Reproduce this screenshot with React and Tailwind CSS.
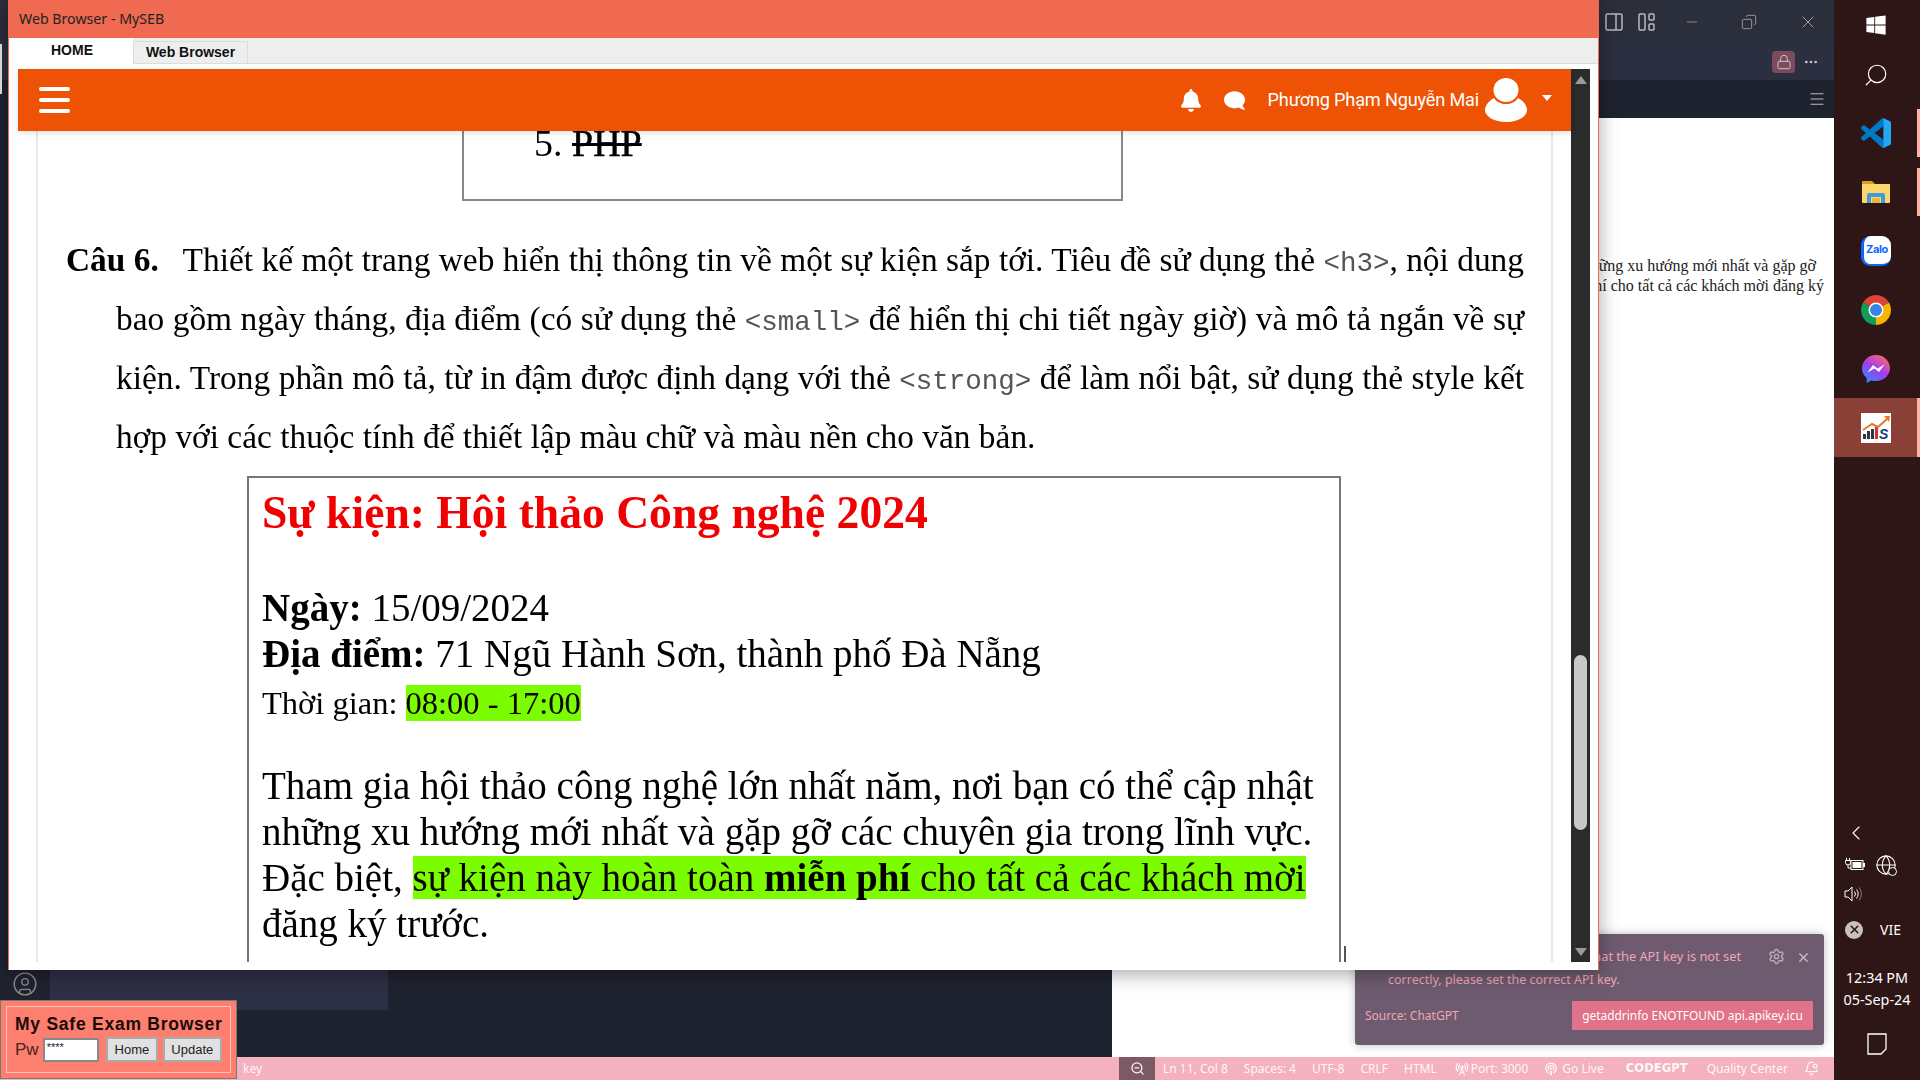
import { FaBell, FaComment, FaWindows } from 'react-icons/fa';
import { X, Settings, Search, ChevronLeft, Minus, Copy, Lock, MoreHorizontal, CircleUser, RadioTower, Podcast, BellDot, ZoomOut, Menu, Globe } from 'lucide-react';

const SERIF = "font-['Liberation_Serif',serif]";
const UI = "font-['Noto_Sans',sans-serif]";

function Mono({ children }) {
  return <span className="font-['Liberation_Mono',monospace] text-[27.5px] text-[#555]">{children}</span>;
}

function JustLine({ className = '', children }) {
  return <div className={`h-[59px] leading-[59px] whitespace-nowrap [text-align:justify] [text-align-last:justify] ${className}`}>{children}</div>;
}

function Question() {
  return (
    <div className="mt-[29px] mr-[27px] ml-[28px] text-[33.4px] text-[#000]">
      <JustLine>
        <b className="mr-[16px]">Câu 6.</b> Thiết kế một trang web hiển thị thông tin về một sự kiện sắp tới. Tiêu đề sử dụng thẻ <Mono>&lt;h3&gt;</Mono>, nội dung
      </JustLine>
      <JustLine className="pl-[50px]">
        bao gồm ngày tháng, địa điểm (có sử dụng thẻ <Mono>&lt;small&gt;</Mono> để hiển thị chi tiết ngày giờ) và mô tả ngắn về sự
      </JustLine>
      <JustLine className="pl-[50px]">
        kiện. Trong phần mô tả, từ in đậm được định dạng với thẻ <Mono>&lt;strong&gt;</Mono> để làm nổi bật, sử dụng thẻ style kết
      </JustLine>
      <div className="h-[59px] pl-[50px] leading-[59px] whitespace-nowrap">
        hợp với các thuộc tính để thiết lập màu chữ và màu nền cho văn bản.
      </div>
    </div>
  );
}

function EventBox() {
  return (
    <div className="relative mt-[10px] ml-[209px] h-[520px] w-[1094px] border-2 border-b-0 border-[#777] pl-[13px] text-[39px] leading-[46px] text-[#000]">
      <h3 className="mt-[10px] mb-[47px] text-[45.6px] leading-[50px] font-bold text-[#f00000]">Sự kiện: Hội thảo Công nghệ 2024</h3>
      <div><b>Ngày:</b> 15/09/2024</div>
      <div><b>Địa điểm:</b> 71 Ngũ Hành Sơn, thành phố Đà Nẵng</div>
      <div className="mt-[3px] text-[32.5px] leading-[46px]">
        Thời gian: <span className="inline-block h-[36px] bg-[#7cfc00] leading-[36px]">08:00 - 17:00</span>
      </div>
      <div className="mt-[37px] whitespace-nowrap">Tham gia hội thảo công nghệ lớn nhất năm, nơi bạn có thể cập nhật</div>
      <div className="whitespace-nowrap">những xu hướng mới nhất và gặp gỡ các chuyên gia trong lĩnh vực.</div>
      <div className="whitespace-nowrap">
        Đặc biệt, <span className="bg-[#7cfc00]">sự kiện này hoàn toàn <b>miễn phí</b> cho tất cả các khách mời</span>
      </div>
      <div className="whitespace-nowrap">đăng ký trước.</div>
      <div className="absolute top-[468px] -right-[7px] h-[18px] w-[2px] bg-[#555]" />
    </div>
  );
}

function Scrollbar() {
  return (
    <div className="flex w-[19px] flex-col items-center bg-[#2b2b2b] pt-[7px]">
      <svg width="12" height="8" viewBox="0 0 12 8"><polygon points="6,0 12,8 0,8" fill="#9a9a9a" /></svg>
      <div className="mt-[571px] h-[175px] w-[13px] rounded-full bg-[#c8c8c8]" />
      <svg className="mt-[118px]" width="12" height="8" viewBox="0 0 12 8"><polygon points="0,0 12,0 6,8" fill="#9a9a9a" /></svg>
    </div>
  );
}

function Navbar() {
  return (
    <div className="relative z-10 flex h-[62px] items-center bg-[#ee5305] pr-[19px] pl-[21px] text-white shadow-[0_2px_6px_rgba(0,0,0,0.12)]">
      <div className="flex w-[31px] flex-col gap-[7px]">
        <div className="h-[4px] rounded-full bg-white" />
        <div className="h-[4px] rounded-full bg-white" />
        <div className="h-[4px] rounded-full bg-white" />
      </div>
      <FaBell className="mr-[22px] ml-auto h-[23px] w-[20px]" />
      <FaComment className="mr-[22px] h-[21px] w-[23px] -scale-x-100" />
      <span className="font-['Roboto',sans-serif] text-[18.2px] tracking-[-0.2px]">Phương Phạm Nguyễn Mai</span>
      <svg className="ml-[6px]" width="42" height="44" viewBox="0 0 42 44">
        <ellipse cx="21" cy="12" rx="12.5" ry="12" fill="#fff" />
        <path d="M9 20 C2 24 0 29 0 32 C0 39 10 44 21 44 C32 44 42 39 42 32 C42 28 39 23 33 20 C28 28 14 28 9 20Z" fill="#fff" />
      </svg>
      <svg className="mt-[-4px] ml-[15px]" width="10" height="6" viewBox="0 0 10 6"><polygon points="0,0 10,0 5,6" fill="#fff" /></svg>
    </div>
  );
}

function ExamWindow() {
  return (
    <div className="absolute top-0 left-[8px] z-10 flex h-[970px] w-[1591px] flex-col border-x border-[#f06a51] bg-white shadow-[0_4px_18px_rgba(0,0,0,0.35)]">
      <div className="flex h-[38px] items-center bg-[#f06a51] pl-[10px] font-['Noto_Sans',sans-serif] text-[14.2px] text-[#222]">Web Browser - MySEB</div>
      <div className="flex h-[26px] items-stretch border-b border-[#dcdcdc] bg-[#eeeeee] font-['Liberation_Sans',sans-serif] text-[14px] font-bold text-[#111]">
        <div className="z-10 flex h-[31px] w-[124px] items-start justify-center bg-white pt-[2px] pl-[2px]">HOME</div>
        <div className="mt-[3px] flex w-[115px] items-center justify-center border-x border-t border-[#dcdcdc]">Web Browser</div>
      </div>
      <div className="mt-[5px] ml-[9px] flex h-[893px] w-[1572px]">
        <div className="flex w-[1553px] flex-col">
          <Navbar />
          <div className={`flex-1 overflow-hidden ${SERIF} blur-[0.4px]`}>
            <div className="mx-[18px] h-[831px] border-x-2 border-[#e8e8e8]">
              <div className="ml-[424px] h-[70px] w-[661px] border-x-2 border-b-2 border-[#888] pl-[70px] text-[38px] leading-[24px]">
                5. <span className="line-through [-webkit-text-stroke:0.5px_#000]">PHP</span>
              </div>
              <Question />
              <EventBox />
            </div>
          </div>
        </div>
        <Scrollbar />
      </div>
    </div>
  );
}

function ExamWidget() {
  return (
    <div className="absolute bottom-px left-0 z-20 h-[79px] w-[237px] border border-[#777] bg-[#fd7f6f] p-[5px]">
      <div className="flex h-full flex-col border border-[#ffc2b8] px-[8px] pt-[5px] font-['Liberation_Sans',sans-serif]">
        <div className="text-[17.5px] leading-[24px] font-bold tracking-[0.75px] whitespace-nowrap text-[#1a0a08]">My Safe Exam Browser</div>
        <div className="mt-[1px] flex items-center">
          <span className="w-[28px] text-[17px] text-[#4a2420]">Pw</span>
          <div className="h-[24px] w-[57px] border-2 border-[#888] bg-white pl-[2px] text-[11px] leading-[14px] text-[#223]">****</div>
          <button className="ml-[7px] h-[25px] w-[52px] border-2 border-[#aaa] bg-[#e1e1e1] text-[13px] text-[#222]">Home</button>
          <button className="ml-[5px] h-[25px] w-[60px] border-2 border-[#aaa] bg-[#e1e1e1] text-[13px] text-[#222]">Update</button>
        </div>
      </div>
    </div>
  );
}

function Toast() {
  return (
    <div className={`absolute top-[934px] left-[1355px] h-[111px] w-[469px] rounded-[3px] bg-[#6e5b70] text-[#f0a6b4] shadow-[0_0_10px_rgba(0,0,0,0.25)] ${UI}`}>
      <div className="flex h-[34px] items-end pb-[2px] pl-[33px] text-[12.8px]">
        <span className="w-[353px] text-right whitespace-nowrap">The error means that the API key is not set</span>
        <Settings className="mb-[1px] ml-[27px] h-[17px] w-[17px] text-[#b6aeb9]" />
        <X className="mb-[1px] ml-[11px] h-[15px] w-[15px] text-[#c8c0ca]" />
      </div>
      <div className="pt-[2px] pl-[33px] text-[12.5px] leading-[20px]">correctly, please set the correct API key.</div>
      <div className="mt-[11px] flex items-center justify-between pr-[11px] pl-[10px] text-[12px]">
        <span>Source: ChatGPT</span>
        <div className="flex h-[29px] w-[241px] items-center justify-center rounded-[1px] bg-[#e0728a] text-[11.9px] whitespace-nowrap text-white">getaddrinfo ENOTFOUND api.apikey.icu</div>
      </div>
    </div>
  );
}

function StatusBar() {
  return (
    <div className={`flex h-[23px] items-center bg-[#f4b1bf] text-[12px] whitespace-nowrap text-[#fff6f7] ${UI}`}>
      <span className="ml-[243px] w-[876px]">key</span>
      <div className="flex h-full w-[36px] items-center justify-center bg-[#7d5a63]"><ZoomOut className="h-[15px] w-[15px]" /></div>
      <span className="ml-[8px]">Ln 11, Col 8</span>
      <span className="ml-[16px]">Spaces: 4</span>
      <span className="ml-[16px]">UTF-8</span>
      <span className="ml-[16px]">CRLF</span>
      <span className="ml-[16px]">HTML</span>
      <RadioTower className="ml-[18px] h-[14px] w-[14px]" />
      <span className="ml-[2px]">Port: 3000</span>
      <Podcast className="ml-[16px] h-[14px] w-[14px]" />
      <span className="ml-[4px]">Go Live</span>
      <span className="mt-[1px] ml-[22px] font-['DejaVu_Sans',sans-serif] text-[11.5px] font-bold tracking-[0.1px]">CODEGPT</span>
      <span className="ml-[19px]">Quality Center</span>
      <BellDot className="ml-[16px] h-[15px] w-[15px]" />
    </div>
  );
}

function VsCodeIcon() {
  return (
    <svg width="30" height="30" viewBox="0 0 100 100">
      <path fillRule="evenodd" fill="#0078c8" d="M70.9 99.3a6.2 6.2 0 0 0 5-.2l20.6-9.9A6.25 6.25 0 0 0 100 83.6V16.4a6.25 6.25 0 0 0-3.5-5.6L75.9.9a6.2 6.2 0 0 0-7.1 1.2L29.4 38.1 12.2 25.1a4.2 4.2 0 0 0-5.3.2L1.4 30.3a4.2 4.2 0 0 0 0 6.2L16.3 50 1.4 63.5a4.2 4.2 0 0 0 0 6.2l5.5 5a4.2 4.2 0 0 0 5.3.2l17.2-13 39.4 36a6.2 6.2 0 0 0 2.5 1.4ZM75 27.3 45.1 50 75 72.7Z" />
      <path fill="#23a9f2" d="M75 .5l21.5 10.3A6.25 6.25 0 0 1 100 16.4v67.2a6.25 6.25 0 0 1-3.5 5.6L75 99.6Z" />
    </svg>
  );
}

function FolderIcon() {
  return (
    <svg width="28" height="24" viewBox="0 0 28 24">
      <path d="M0 2a1 1 0 0 1 1-1h9l3 3H0Z" fill="#d9a011" />
      <path d="M0 4h28v18a1 1 0 0 1-1 1H1a1 1 0 0 1-1-1Z" fill="#fcd86a" />
      <path d="M5 23V15a2 2 0 0 1 2-2h14a2 2 0 0 1 2 2v8h-4v-6H9v6Z" fill="#3f9bdc" />
      <rect x="10" y="18" width="8" height="5" fill="#e6b93e" />
    </svg>
  );
}

function ZaloIcon() {
  return (
    <div className="flex h-[30px] w-[30px] items-center justify-center rounded-[9px] border-b-[2px] border-l-[3px] border-[#0a68ff] bg-white font-['Inter',sans-serif] text-[11px] font-bold tracking-[-0.4px] text-[#0a68ff]">Zalo</div>
  );
}

function ChromeIcon() {
  return (
    <svg width="30" height="30" viewBox="4 4 40 40">
      <path d="M24 24 6.68 14A20 20 0 0 1 41.32 14Z" fill="#db4437" />
      <path d="M24 24 41.32 14A20 20 0 0 1 24 44Z" fill="#f4b400" />
      <path d="M24 24V44A20 20 0 0 1 6.68 14Z" fill="#0f9d58" />
      <circle cx="24" cy="24" r="10" fill="#fff" />
      <circle cx="24" cy="24" r="8" fill="#3b82e8" />
    </svg>
  );
}

function MessengerIcon() {
  return (
    <svg width="30" height="30" viewBox="0 0 30 30">
      <defs>
        <linearGradient id="msg" x1="0.2" y1="1" x2="0.8" y2="0">
          <stop offset="0" stopColor="#2d8cff" />
          <stop offset="0.5" stopColor="#a33bf0" />
          <stop offset="1" stopColor="#ff6a6a" />
        </linearGradient>
      </defs>
      <path d="M15 1C7 1 1 7 1 14.3c0 4 1.8 7.4 4.7 9.7V29l4.500-2.500c1.500.4 3.100.6 4.800.6 8 0 14-6 14-12.800C29 7 23 1 15 1Z" fill="url(#msg)" />
      <path d="M6.500 18.500 12 11l4.500 3.500L23.500 10.500 18 18l-4.500-3.500Z" fill="#fff" />
    </svg>
  );
}

function MisIcon() {
  return (
    <svg width="30" height="30" viewBox="0 0 30 30">
      <rect width="30" height="30" fill="#fff" />
      <rect x="2" y="21" width="3" height="5" fill="#334" />
      <rect x="6" y="18" width="3" height="8" fill="#334" />
      <rect x="10" y="16" width="3" height="10" fill="#334" />
      <rect x="14" y="13" width="3" height="13" fill="#c33" />
      <path d="M2 17 11 11l6 3 9-8" fill="none" stroke="#e8792b" strokeWidth="2" />
      <polygon points="23,3 29,3 28,9" fill="#e8792b" />
      <text x="18" y="26" fontSize="14" fontWeight="700" fontStyle="italic" fill="#223a7a" fontFamily="Liberation Sans">S</text>
    </svg>
  );
}

function BatteryIcon() {
  return (
    <svg width="20" height="16" viewBox="0 0 20 16" fill="none" stroke="#fff">
      <path d="M1.500 1v2.500M4.500 1v2.500M0.500 3.500h5v2a2.500 2.500 0 0 1-5 0ZM3 8v3h3" strokeWidth="1" />
      <rect x="6" y="3.500" width="12" height="9" strokeWidth="1" />
      <rect x="7.500" y="5" width="9" height="6" fill="#fff" stroke="none" />
      <rect x="18" y="6" width="2" height="4" fill="#fff" stroke="none" />
    </svg>
  );
}

function SpeakerIcon() {
  return (
    <svg width="20" height="18" viewBox="0 0 20 18" fill="none" stroke="#fff" strokeWidth="1">
      <path d="M1 6h3l4-4v14l-4-4H1Z" />
      <path d="M10.500 6.500a4 4 0 0 1 0 5M12.500 4.500a7 7 0 0 1 0 9" />
      <path d="M15 2.500a10 10 0 0 1 0 13" stroke="#8a7a7a" />
    </svg>
  );
}

function TaskButton({ pinned, active, children }) {
  return (
    <div className={`flex h-[59px] items-center ${active ? 'bg-[#8a4036]' : ''}`}>
      <div className="flex flex-1 justify-center">{children}</div>
      <div className={`h-[48px] w-[3px] ${pinned ? 'bg-[#ffb3a7]' : ''} ${active ? 'h-full' : ''}`} />
    </div>
  );
}

function Taskbar() {
  return (
    <div className={`flex w-[86px] flex-col bg-[#2f1616] text-white ${UI}`}>
      <div className="flex h-[50px] items-center justify-center pr-[3px]"><FaWindows className="h-[22px] w-[22px]" /></div>
      <div className="flex h-[48px] items-center justify-center pt-[2px] pr-[3px]"><Search className="h-[26px] w-[26px] -scale-x-100" strokeWidth={1.1} /></div>
      <div className="h-[5px]" />
      <TaskButton pinned><VsCodeIcon /></TaskButton>
      <TaskButton pinned><FolderIcon /></TaskButton>
      <TaskButton><ZaloIcon /></TaskButton>
      <TaskButton><ChromeIcon /></TaskButton>
      <TaskButton><MessengerIcon /></TaskButton>
      <TaskButton active pinned><MisIcon /></TaskButton>
      <ChevronLeft className="mt-[364px] ml-[10px] h-[24px] w-[24px]" strokeWidth={1.1} />
      <div className="mt-[9px] flex items-center gap-[10px] pl-[11px]">
        <BatteryIcon />
        <div className="relative">
          <Globe className="h-[22px] w-[22px]" strokeWidth={1.2} />
          <div className="absolute right-0 bottom-0 h-[9px] w-[9px] rounded-full border border-white bg-[#2f1616]" />
        </div>
      </div>
      <div className="mt-[9px] pl-[10px]"><SpeakerIcon /></div>
      <div className="mt-[16px] flex items-center pl-[11px]">
        <div className="flex h-[18px] w-[18px] items-center justify-center rounded-full bg-[#c8c0c0]"><X className="h-[13px] w-[13px] text-[#2f1616]" strokeWidth={3} /></div>
        <span className="ml-[17px] text-[14px]">VIE</span>
      </div>
      <div className="mt-[27px] text-center text-[14.4px] leading-[22px] whitespace-nowrap">12:34 PM<br />05-Sep-24</div>
      <div className="mt-[22px] flex justify-center">
        <svg width="20" height="22" viewBox="0 0 20 22"><path d="M1 1h18v15l-5 5H1Z" fill="none" stroke="#fff" strokeWidth="1.300" /></svg>
      </div>
    </div>
  );
}

function VsCode() {
  return (
    <div className="relative flex min-w-0 flex-1 flex-col">
      <div className="absolute top-[44px] left-0 h-[50px] w-[2px] bg-[#e8e8e8]" />
      <div className="flex h-[44px] items-center bg-[#2b2e3b] pl-[1605px] text-[#b8bac2]">
        <svg width="18" height="18" viewBox="0 0 18 18" fill="none" stroke="currentColor" strokeWidth="1.500">
          <rect x="1" y="1" width="16" height="16" rx="1.500" />
          <path d="M11 1v16" />
        </svg>
        <svg className="ml-[15px]" width="17" height="18" viewBox="0 0 17 18" fill="none" stroke="currentColor" strokeWidth="1.500">
          <rect x="1" y="1" width="6" height="16" rx="1" />
          <rect x="11" y="1" width="5" height="6" rx="1" />
          <rect x="11" y="11" width="5" height="6" rx="1" />
        </svg>
        <Minus className="ml-[29px] h-[16px] w-[16px]" strokeWidth={1} />
        <Copy className="ml-[41px] h-[16px] w-[16px] -scale-x-100" strokeWidth={1.1} />
        <X className="ml-[41px] h-[20px] w-[20px]" strokeWidth={1} />
      </div>
      <div className="flex h-[36px] items-center justify-end bg-[#2c2f40] pr-[15px] text-[#c8c8d0]">
        <div className="mr-[8px] flex h-[22px] w-[23px] items-center justify-center rounded-[4px] bg-[#7d4a5e]"><Lock className="h-[18px] w-[16px]" strokeWidth={1.5} /></div>
        <MoreHorizontal className="h-[16px] w-[16px]" />
      </div>
      <div className="flex h-[38px] items-center justify-end bg-[#1f2330] pr-[8px] text-[#b8bac2]">
        <Menu className="h-[18px] w-[18px]" strokeWidth={1.5} />
      </div>
      <div className="flex min-h-0 flex-1">
        <div className="flex w-[1112px] flex-col bg-[#1f2330]">
          <div className="h-[852px]" />
          <div className="flex h-[87px]">
            <div className="w-[50px] pt-[1px] pl-[12px]"><CircleUser className="h-[26px] w-[26px] text-[#8a8a8a]" strokeWidth={1.3} /></div>
            <div className="h-[40px] w-[338px] bg-[#2d3044]" />
          </div>
        </div>
        <div className={`flex-1 bg-white pt-[138px] pr-[10px] text-right text-[16px] leading-[20px] whitespace-nowrap text-[#222] ${SERIF}`}>
          <div className="pr-[8px]">những xu hướng mới nhất và gặp gỡ</div>
          <div>hoàn toàn miễn phí cho tất cả các khách mời đăng ký</div>
        </div>
      </div>
      <StatusBar />
    </div>
  );
}

export default function App() {
  return (
    <div className="relative flex h-[1080px] w-[1920px] overflow-hidden bg-[#1f2330]">
      <VsCode />
      <Taskbar />
      <Toast />
      <ExamWindow />
      <ExamWidget />
    </div>
  );
}
